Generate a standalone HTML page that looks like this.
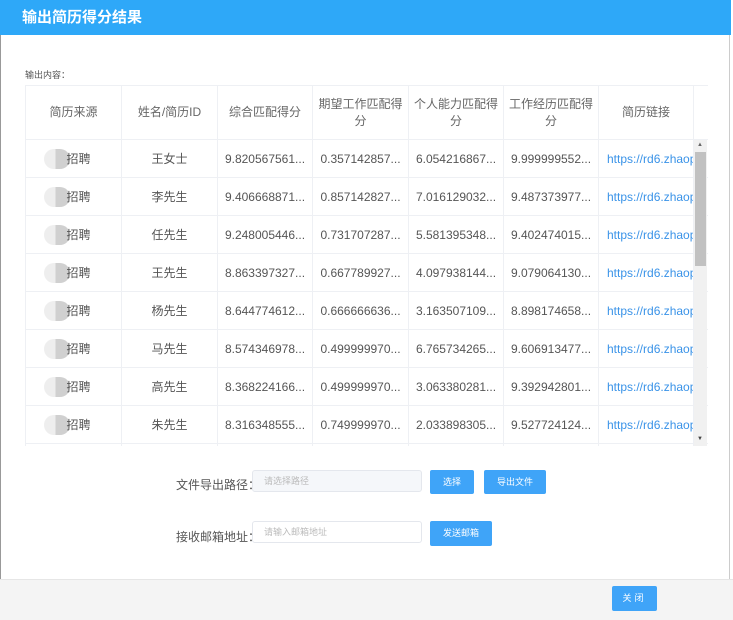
<!DOCTYPE html>
<html><head><meta charset="utf-8"><style>
*{margin:0;padding:0;box-sizing:border-box}
body{width:733px;height:620px;overflow:hidden;background:#fff;font-family:"Liberation Sans","Noto Sans CJK SC",sans-serif;position:relative}
.hd{position:absolute;left:0;top:0;width:731px;height:35px;background:#2ea8f8;color:#fff;font-size:15px;font-weight:bold;line-height:36px;padding-left:22px}
.lb{position:absolute;left:0;top:35px;width:1px;height:544px;background:#999}
.rb{position:absolute;left:729px;top:35px;width:1px;height:544px;background:#ccc}
.sub{position:absolute;left:25px;top:68px;font-size:9px;color:#555}
table{border-collapse:collapse;table-layout:fixed;width:683px}
td{border:1px solid #eef0f4;font-size:12px;color:#555;text-align:center;white-space:nowrap;overflow:hidden;padding:0 4px;height:38px;vertical-align:middle;text-overflow:clip}
th{border:1px solid #eef0f4;font-size:12px;color:#666;font-weight:normal;height:54px;line-height:17px;padding:0 5px;vertical-align:middle}
td.l{color:#3a93e8;text-align:left;padding-left:8px}
.blur{display:inline-block;width:26px;height:20px;border-radius:10px;background:linear-gradient(90deg,#eee 45%,#d0d0d0 45%);vertical-align:-6px;margin-right:-4px;margin-left:-12px}
.clip{position:absolute;left:25px;top:85px;width:683px;height:361px;overflow:hidden}
.sb{position:absolute;left:694px;top:140px;width:13px;height:306px;background:#f1f1f1}
.th{position:absolute;left:695px;top:152px;width:11px;height:114px;background:#c1c1c1}
.lab{position:absolute;font-size:12px;color:#555}
.inp{position:absolute;border:1px solid #e4e7ed;border-radius:3px;font-size:9px;color:#bbb;padding-left:11px;line-height:20px}
.btn{position:absolute;background:#3fa4f8;color:#fff;font-size:9px;text-align:center;border-radius:2px}
.ft{position:absolute;left:0;top:579px;width:733px;height:41px;background:#f4f4f4;border-top:1px solid #e6e6e6}
</style></head><body>
<div class="hd">输出简历得分结果</div>
<div class="lb"></div><div class="rb"></div>
<div class="sub">输出内容：</div>
<div class="clip">
<table>
<colgroup><col style="width:96px"><col style="width:96px"><col style="width:95px"><col style="width:96px"><col style="width:95px"><col style="width:95px"><col style="width:95px"><col style="width:15px"></colgroup>
<tr><th>简历来源</th><th>姓名/简历ID</th><th>综合匹配得分</th><th>期望工作匹配得分</th><th>个人能力匹配得分</th><th>工作经历匹配得分</th><th>简历链接</th><th style="padding:0"></th></tr>
<tr><td><span class="blur"></span>招聘</td><td>王女士</td><td>9.820567561...</td><td>0.357142857...</td><td>6.054216867...</td><td>9.999999552...</td><td class="l">https://rd6.zhaopin</td><td></td></tr>
<tr><td><span class="blur"></span>招聘</td><td>李先生</td><td>9.406668871...</td><td>0.857142827...</td><td>7.016129032...</td><td>9.487373977...</td><td class="l">https://rd6.zhaopin</td><td></td></tr>
<tr><td><span class="blur"></span>招聘</td><td>任先生</td><td>9.248005446...</td><td>0.731707287...</td><td>5.581395348...</td><td>9.402474015...</td><td class="l">https://rd6.zhaopin</td><td></td></tr>
<tr><td><span class="blur"></span>招聘</td><td>王先生</td><td>8.863397327...</td><td>0.667789927...</td><td>4.097938144...</td><td>9.079064130...</td><td class="l">https://rd6.zhaopin</td><td></td></tr>
<tr><td><span class="blur"></span>招聘</td><td>杨先生</td><td>8.644774612...</td><td>0.666666636...</td><td>3.163507109...</td><td>8.898174658...</td><td class="l">https://rd6.zhaopin</td><td></td></tr>
<tr><td><span class="blur"></span>招聘</td><td>马先生</td><td>8.574346978...</td><td>0.499999970...</td><td>6.765734265...</td><td>9.606913477...</td><td class="l">https://rd6.zhaopin</td><td></td></tr>
<tr><td><span class="blur"></span>招聘</td><td>高先生</td><td>8.368224166...</td><td>0.499999970...</td><td>3.063380281...</td><td>9.392942801...</td><td class="l">https://rd6.zhaopin</td><td></td></tr>
<tr><td><span class="blur"></span>招聘</td><td>朱先生</td><td>8.316348555...</td><td>0.749999970...</td><td>2.033898305...</td><td>9.527724124...</td><td class="l">https://rd6.zhaopin</td><td></td></tr>
<tr><td></td><td></td><td></td><td></td><td></td><td></td><td class="l">https://rd6.zhaopin</td><td></td></tr>
</table>
</div>
<div class="sb"></div><div class="th"></div>
<div style="position:absolute;left:697px;top:142px;font-size:6px;color:#666">▲</div>
<div style="position:absolute;left:697px;top:436px;font-size:6px;color:#444">▼</div>
<div class="lab" style="left:176px;top:476px">文件导出路径：</div>
<div class="inp" style="left:252px;top:470px;width:170px;height:22px;background:#f5f7fa">请选择路径</div>
<div class="btn" style="left:430px;top:470px;width:44px;height:24px;line-height:24px">选择</div>
<div class="btn" style="left:484px;top:470px;width:62px;height:24px;line-height:24px">导出文件</div>
<div class="lab" style="left:176px;top:528px">接收邮箱地址：</div>
<div class="inp" style="left:252px;top:521px;width:170px;height:22px">请输入邮箱地址</div>
<div class="btn" style="left:430px;top:521px;width:62px;height:25px;line-height:25px">发送邮箱</div>
<div class="ft"></div>
<div class="btn" style="left:612px;top:586px;width:45px;height:25px;line-height:25px;letter-spacing:3px">关闭</div>
</body></html>
